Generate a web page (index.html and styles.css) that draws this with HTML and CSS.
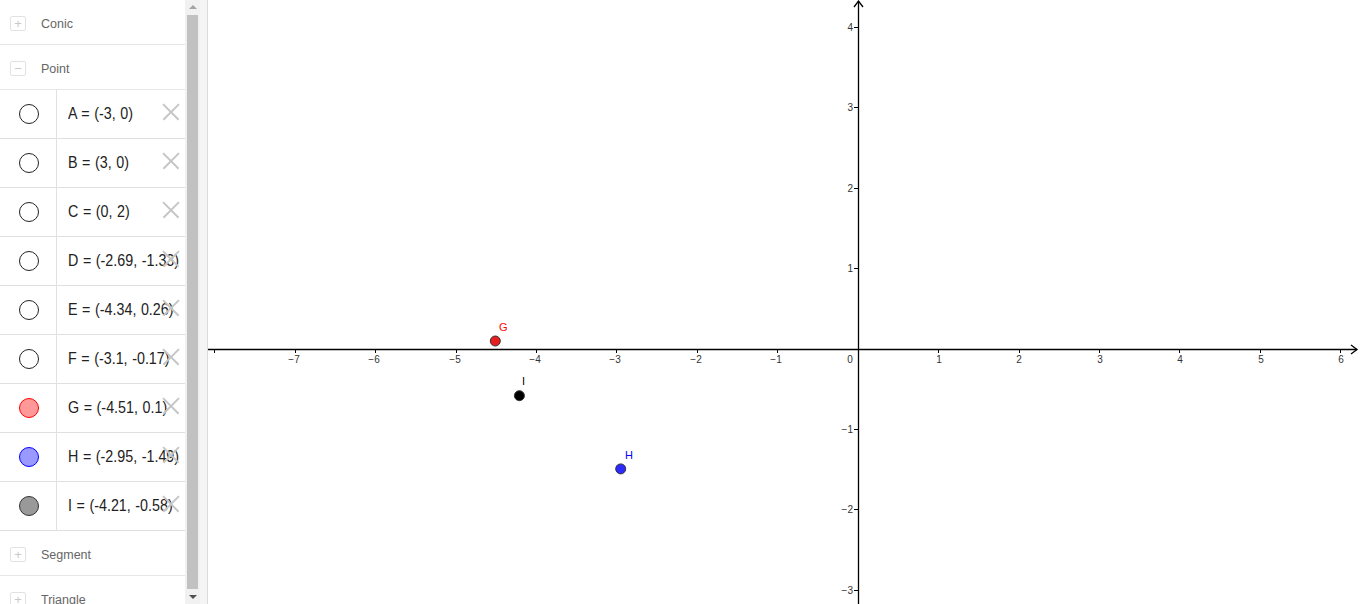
FILE: index.html
```html
<!DOCTYPE html>
<html>
<head>
<meta charset="utf-8">
<link rel="stylesheet" href="styles.css">
</head>
<body>
<div class="app">
  <div class="algebra">
    <div class="list">
      <div class="group"><span class="toggle">+</span><span class="gname">Conic</span></div>
      <div class="group"><span class="toggle">&minus;</span><span class="gname">Point</span></div>
      <div class="item"><div class="mark"><span class="dot"></span></div><div class="expr">A = (-3, 0)</div><span class="del"></span></div>
      <div class="item"><div class="mark"><span class="dot"></span></div><div class="expr">B = (3, 0)</div><span class="del"></span></div>
      <div class="item"><div class="mark"><span class="dot"></span></div><div class="expr">C = (0, 2)</div><span class="del"></span></div>
      <div class="item"><div class="mark"><span class="dot"></span></div><div class="expr">D = (-2.69, -1.33)</div><span class="del"></span></div>
      <div class="item"><div class="mark"><span class="dot"></span></div><div class="expr">E = (-4.34, 0.26)</div><span class="del"></span></div>
      <div class="item"><div class="mark"><span class="dot"></span></div><div class="expr">F = (-3.1, -0.17)</div><span class="del"></span></div>
      <div class="item"><div class="mark"><span class="dot red"></span></div><div class="expr">G = (-4.51, 0.1)</div><span class="del"></span></div>
      <div class="item"><div class="mark"><span class="dot blue"></span></div><div class="expr">H = (-2.95, -1.49)</div><span class="del"></span></div>
      <div class="item"><div class="mark"><span class="dot gray"></span></div><div class="expr">I = (-4.21, -0.58)</div><span class="del"></span></div>
      <div class="group"><span class="toggle">+</span><span class="gname">Segment</span></div>
      <div class="group"><span class="toggle">+</span><span class="gname">Triangle</span></div>
    </div>
    <div class="scrollbar">
      <div class="arrow up"></div>
      <div class="thumb"></div>
      <div class="arrow down"></div>
    </div>
  </div>
  <div class="splitter"></div>
  <div class="graphics">
    <svg class="plot" width="1152" height="604" viewBox="0 0 1152 604" xmlns="http://www.w3.org/2000/svg">
      <g stroke="#000" stroke-width="1.3" fill="none">
        <line x1="0" y1="349.5" x2="1149" y2="349.5"/>
        <polyline points="1143,345 1149,349.5 1143,354"/>
        <line x1="650.5" y1="604" x2="650.5" y2="1"/>
        <polyline points="646,7 650.5,1 655,7"/>
      </g>
      <g stroke="#000" stroke-width="1">
        <line x1="6.5" y1="349" x2="6.5" y2="353"/>
        <line x1="87.5" y1="349" x2="87.5" y2="353"/>
        <line x1="167.5" y1="349" x2="167.5" y2="353"/>
        <line x1="248.5" y1="349" x2="248.5" y2="353"/>
        <line x1="328.5" y1="349" x2="328.5" y2="353"/>
        <line x1="408.5" y1="349" x2="408.5" y2="353"/>
        <line x1="489.5" y1="349" x2="489.5" y2="353"/>
        <line x1="569.5" y1="349" x2="569.5" y2="353"/>
        <line x1="730.5" y1="349" x2="730.5" y2="353"/>
        <line x1="811.5" y1="349" x2="811.5" y2="353"/>
        <line x1="891.5" y1="349" x2="891.5" y2="353"/>
        <line x1="971.5" y1="349" x2="971.5" y2="353"/>
        <line x1="1052.5" y1="349" x2="1052.5" y2="353"/>
        <line x1="1132.5" y1="349" x2="1132.5" y2="353"/>
        <line x1="646" y1="27.5" x2="650" y2="27.5"/>
        <line x1="646" y1="107.5" x2="650" y2="107.5"/>
        <line x1="646" y1="188.5" x2="650" y2="188.5"/>
        <line x1="646" y1="268.5" x2="650" y2="268.5"/>
        <line x1="646" y1="429.5" x2="650" y2="429.5"/>
        <line x1="646" y1="509.5" x2="650" y2="509.5"/>
        <line x1="646" y1="590.5" x2="650" y2="590.5"/>
      </g>
      <g class="axlbl" text-anchor="middle">
        <text x="86" y="363">&#8722;7</text>
        <text x="166" y="363">&#8722;6</text>
        <text x="247" y="363">&#8722;5</text>
        <text x="327" y="363">&#8722;4</text>
        <text x="407" y="363">&#8722;3</text>
        <text x="488" y="363">&#8722;2</text>
        <text x="568" y="363">&#8722;1</text>
        <text x="642" y="363">0</text>
        <text x="731" y="363">1</text>
        <text x="811" y="363">2</text>
        <text x="892" y="363">3</text>
        <text x="972" y="363">4</text>
        <text x="1053" y="363">5</text>
        <text x="1133" y="363">6</text>
      </g>
      <g class="axlbl" text-anchor="end">
        <text x="645" y="31">4</text>
        <text x="645" y="111">3</text>
        <text x="645" y="192">2</text>
        <text x="645" y="272">1</text>
        <text x="645" y="433">&#8722;1</text>
        <text x="645" y="513">&#8722;2</text>
        <text x="645" y="594">&#8722;3</text>
      </g>
      <circle cx="287.3" cy="341" r="5" fill="#e61e1e" stroke="#333" stroke-width="1"/>
      <circle cx="311.4" cy="395.7" r="5" fill="#000" stroke="#333" stroke-width="1"/>
      <circle cx="412.7" cy="468.9" r="5" fill="#2b2bff" stroke="#333" stroke-width="1"/>
      <text class="plbl" x="291" y="331" fill="#ff0000">G</text>
      <text class="plbl" x="314" y="385" fill="#000">I</text>
      <text class="plbl" x="417" y="459" fill="#0000ff">H</text>
    </svg>
  </div>
</div>
</body>
</html>
```

FILE: styles.css
```css
html, body {
  margin: 0;
  padding: 0;
  background: #fff;
  overflow: hidden;
}
.app {
  display: flex;
  width: 1360px;
  height: 604px;
  font-family: "Liberation Sans", Arial, sans-serif;
}
.algebra {
  width: 200px;
  height: 604px;
  display: flex;
  overflow: hidden;
  flex-shrink: 0;
}
.list {
  width: 185px;
  flex-shrink: 0;
  display: flex;
  flex-direction: column;
}
.group {
  flex-shrink: 0;
  border-bottom: 1px solid #e6e6e6;
  display: flex;
  align-items: center;
  padding-top: 3px;
  box-sizing: border-box;
  height: 45px;
}
.toggle {
  width: 14px;
  height: 13px;
  margin-left: 10px;
  border: 1px solid #e2e2e2;
  border-radius: 2px;
  color: #c8c8c8;
  font-size: 13px;
  line-height: 13px;
  text-align: center;
  box-sizing: content-box;
}
.gname {
  margin-left: 15px;
  font-size: 12.5px;
  color: #666;
}
.item {
  height: 48px;
  flex-shrink: 0;
  border-bottom: 1px solid #e0e0e0;
  display: flex;
  align-items: center;
  position: relative;
}
.mark {
  width: 56px;
  height: 48px;
  border-right: 1px solid #e0e0e0;
  display: flex;
  align-items: center;
  justify-content: center;
  flex-shrink: 0;
}
.dot {
  width: 18px;
  height: 18px;
  border-radius: 50%;
  border: 1px solid #222;
  background: #fff;
  margin-top: -1px;
  margin-left: 1px;
}
.dot.red { background: #ff9999; border-color: #ff0000; }
.dot.blue { background: #9999ff; border-color: #0000ff; }
.dot.gray { background: #999; border-color: #333; }
.expr {
  display: inline-block;
  margin-left: 11px;
  margin-top: -2px;
  font-family: "Liberation Sans", Arial, sans-serif;
  font-size: 14.3px;
  word-spacing: 0.6px;
  color: #222;
  white-space: nowrap;
  transform: scaleY(1.2);
}
.del {
  position: absolute;
  left: 162px;
  top: 13px;
  width: 17px;
  height: 17px;
}
.del::before, .del::after {
  content: "";
  position: absolute;
  left: -2px;
  top: 8px;
  width: 22px;
  height: 1.5px;
  background: #c6c6c6;
  transform: rotate(45deg);
}
.del::after {
  transform: rotate(-45deg);
}
.scrollbar {
  width: 15px;
  height: 604px;
  background: #f1f1f1;
  display: flex;
  flex-direction: column;
  align-items: center;
  flex-shrink: 0;
}
.thumb {
  width: 11px;
  flex: 1;
  background: #c1c1c1;
  margin: 2px 0;
}
.arrow {
  width: 0;
  height: 0;
  border-left: 4px solid transparent;
  border-right: 4px solid transparent;
  margin: 5px 0 4px;
}
.arrow.up { border-bottom: 4px solid #a3a3a3; }
.arrow.down { border-top: 4px solid #505050; margin: 4px 0 5px; }
.splitter {
  width: 7px;
  flex-shrink: 0;
  background: #f5f5f5;
  border-right: 1px solid #dcdcdc;
}
.graphics {
  flex: 1;
  height: 604px;
  position: relative;
}
.plot {
  display: block;
}
.axlbl {
  font-family: "Liberation Sans", Arial, sans-serif;
  font-size: 10px;
  fill: #333;
}
.plbl {
  font-family: "Liberation Sans", Arial, sans-serif;
  font-size: 11px;
}
```
